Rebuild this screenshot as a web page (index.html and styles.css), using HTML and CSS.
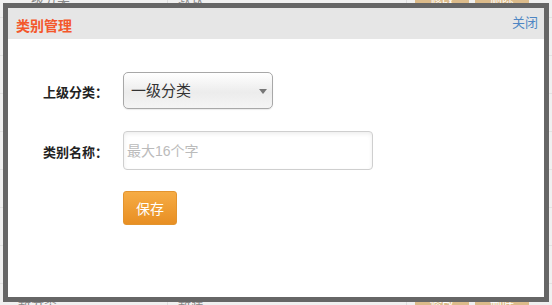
FILE: index.html
```html
<!DOCTYPE html>
<html lang="zh-CN">
<head>
    <meta charset="UTF-8">
    <title>类别管理</title>
    <link rel="stylesheet" href="styles.css">
</head>
<body>
    <!-- 背景列表 -->
    <div class="page">
        <div class="row"><span class="cell c1">一级分类</span><span class="cell c2">默认</span><span class="cell c3"></span><span class="cell c4"><span class="btn-mini">修改</span><span class="btn-mini">删除</span></span></div>
        <div class="row"><span class="cell c1">二级分类</span><span class="cell c2">默认</span><span class="cell c3"></span><span class="cell c4"><span class="btn-mini">修改</span><span class="btn-mini">删除</span></span></div>
        <div class="row"><span class="cell c1">二级分类</span><span class="cell c2">默认</span><span class="cell c3"></span><span class="cell c4"><span class="btn-mini">修改</span><span class="btn-mini">删除</span></span></div>
        <div class="row"><span class="cell c1">二级分类</span><span class="cell c2">默认</span><span class="cell c3"></span><span class="cell c4"><span class="btn-mini">修改</span><span class="btn-mini">删除</span></span></div>
        <div class="row"><span class="cell c1">二级分类</span><span class="cell c2">默认</span><span class="cell c3"></span><span class="cell c4"><span class="btn-mini">修改</span><span class="btn-mini">删除</span></span></div>
        <div class="row"><span class="cell c1">二级分类</span><span class="cell c2">默认</span><span class="cell c3"></span><span class="cell c4"><span class="btn-mini">修改</span><span class="btn-mini">删除</span></span></div>
        <div class="row"><span class="cell c1">二级分类</span><span class="cell c2">默认</span><span class="cell c3"></span><span class="cell c4"><span class="btn-mini">修改</span><span class="btn-mini">删除</span></span></div>
        <div class="row"><span class="cell c1">新分类</span><span class="cell c2">新建</span><span class="cell c3"></span><span class="cell c4"><span class="btn-mini">修改</span><span class="btn-mini">删除</span></span></div>
        <div class="row"><span class="cell c1">新分类</span><span class="cell c2">新建</span><span class="cell c3"></span><span class="cell c4"><span class="btn-mini">修改</span><span class="btn-mini">删除</span></span></div>
    </div>

    <!-- 弹出层 -->
    <div class="mask">
        <div class="dialog">
            <div class="dialog-head">
                <span class="dialog-title">类别管理</span>
                <a class="dialog-close" href="#">关闭</a>
            </div>
            <form class="dialog-form">
                <label class="form-label">上级分类：</label>
                <span class="select-wrap">
                    <select class="form-select">
                        <option>一级分类</option>
                    </select>
                </span>

                <label class="form-label">类别名称：</label>
                <input class="form-input" type="text" placeholder="最大16个字">

                <span></span>
                <button class="btn-save" type="button">保存</button>
            </form>
        </div>
    </div>
</body>
</html>
```

FILE: styles.css
```css
body {
    margin: 0;
    background: #f0f0f0;
    font-family: "Liberation Sans", "Noto Sans CJK SC", sans-serif;
    overflow: hidden;
}

/* 背景列表 */
.page {
    margin-top: -20px;
    height: 325px;
    overflow: hidden;
}

.row {
    display: flex;
    height: 37px;
    align-items: center;
    border-bottom: 1px solid #e2e2e2;
    font-size: 13px;
    color: #888;
}

.cell {
    height: 100%;
    display: flex;
    align-items: center;
    box-sizing: border-box;
}

.c1 { width: 168px; padding-left: 18px; border-right: 1px solid #ddd; }
.c2 { width: 239px; padding-left: 10px; border-right: 1px solid #ddd; }
.c3 { width: 8px; }
.c4 { gap: 6px; }

.btn-mini {
    width: 54px;
    height: 24px;
    background: #dcbb8a;
    color: #fff;
    font-size: 12px;
    display: flex;
    align-items: center;
    justify-content: center;
}

/* 弹出层 */
.mask {
    position: fixed;
    top: 0;
    left: 0;
    right: 0;
    bottom: 0;
    padding: 3px;
    display: flex;
}

.dialog {
    flex: 1;
    background: #fff;
    border: 5px solid #666;
}

.dialog-head {
    height: 31px;
    background: #e6e6e6;
    display: flex;
    align-items: center;
    justify-content: space-between;
    padding: 0 6px 0 8px;
}

.dialog-title {
    font-size: 14px;
    font-weight: bold;
    color: #f4572b;
    padding-top: 2px;
}

.dialog-close {
    font-size: 13px;
    color: #4e86c4;
    text-decoration: none;
    margin-top: -4px;
}

.dialog-form {
    display: grid;
    grid-template-columns: 80px auto;
    justify-content: start;
    align-items: center;
    padding: 33px 0 0 35px;
    row-gap: 22px;
}

.form-label {
    font-family: "Liberation Sans", "Noto Sans CJK JP", sans-serif;
    font-size: 13px;
    font-weight: bold;
    color: #222;
    padding-top: 1px;
}

.select-wrap {
    position: relative;
    display: block;
    width: 150px;
}

.select-wrap::after {
    content: "";
    position: absolute;
    right: 6px;
    top: 17px;
    border-left: 4px solid transparent;
    border-right: 4px solid transparent;
    border-top: 5px solid #777;
    pointer-events: none;
}

.form-select {
    appearance: none;
    -webkit-appearance: none;
    display: block;
    width: 150px;
    height: 37px;
    padding: 0 0 0 7px;
    border: 1px solid #a8a8a8;
    border-radius: 5px;
    background: linear-gradient(#fff, #ececec 55%, #f4f4f4);
    box-shadow: 0 1px 1px rgba(0, 0, 0, 0.08);
    font-family: inherit;
    font-size: 15px;
    color: #333;
}

.form-input {
    display: block;
    width: 250px;
    height: 39px;
    box-sizing: border-box;
    padding: 0 3px;
    border: 1px solid #cfcfcf;
    border-radius: 4px;
    box-shadow: inset 0 2px 4px rgba(0, 0, 0, 0.07);
    font-family: inherit;
    font-size: 14px;
    color: #333;
}

.form-input::placeholder {
    color: #bbb;
}

.btn-save {
    justify-self: start;
    width: 54px;
    height: 34px;
    margin-top: -1px;
    border: 1px solid #e3942e;
    border-radius: 3px;
    background: linear-gradient(#f6ac45, #e88f23);
    color: #fff;
    font-family: inherit;
    font-size: 14px;
    padding: 0;
}
```
